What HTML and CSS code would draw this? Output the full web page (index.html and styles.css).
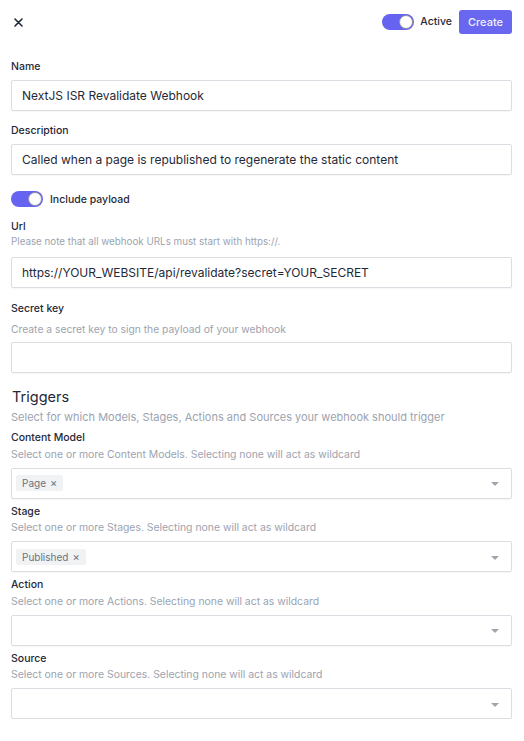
FILE: index.html
```html
<!DOCTYPE html>
<html>
<head>
<meta charset="utf-8">
<link rel="stylesheet" href="styles.css">
</head>
<body>
<div class="page">
  <header class="topbar">
    <button class="close" aria-label="Close">
      <svg width="9" height="9" viewBox="0 0 9 9"><path d="M1 1L8 8M8 1L1 8" stroke="#1f2937" stroke-width="1.6" stroke-linecap="round"/></svg>
    </button>
    <div class="top-actions">
      <span class="toggle"><span class="knob"></span></span>
      <span class="toggle-label">Active</span>
      <button class="create">Create</button>
    </div>
  </header>

  <div class="field f-name">
    <div class="label">Name</div>
    <div class="input">NextJS ISR Revalidate Webhook</div>
  </div>

  <div class="field f-desc">
    <div class="label">Description</div>
    <div class="input">Called when a page is republished to regenerate the static content</div>
  </div>

  <div class="toggle-row">
    <span class="toggle"><span class="knob"></span></span>
    <span class="toggle-label">Include payload</span>
  </div>

  <div class="field f-url">
    <div class="label">Url</div>
    <div class="help help-url">Please note that all webhook URLs must start with https://.</div>
    <div class="input">https://YOUR_WEBSITE/api/revalidate?secret=YOUR_SECRET</div>
  </div>

  <div class="field f-secret">
    <div class="label">Secret key</div>
    <div class="help help-secret">Create a secret key to sign the payload of your webhook</div>
    <div class="input"></div>
  </div>

  <h2 class="section">Triggers</h2>
  <div class="help section-help">Select for which Models, Stages, Actions and Sources your webhook should trigger</div>

  <div class="field sel-field">
    <div class="label">Content Model</div>
    <div class="help help-md">Select one or more Content Models. Selecting none will act as wildcard</div>
    <div class="select">
      <div class="tags"><span class="tag">Page <span class="tag-x">×</span></span></div>
      <span class="chev"></span>
    </div>
  </div>

  <div class="field sel-field">
    <div class="label">Stage</div>
    <div class="help help-md">Select one or more Stages. Selecting none will act as wildcard</div>
    <div class="select">
      <div class="tags"><span class="tag">Published <span class="tag-x">×</span></span></div>
      <span class="chev"></span>
    </div>
  </div>

  <div class="field sel-field">
    <div class="label">Action</div>
    <div class="help help-md">Select one or more Actions. Selecting none will act as wildcard</div>
    <div class="select">
      <div class="tags"></div>
      <span class="chev"></span>
    </div>
  </div>

  <div class="field sel-field">
    <div class="label">Source</div>
    <div class="help help-md">Select one or more Sources. Selecting none will act as wildcard</div>
    <div class="select">
      <div class="tags"></div>
      <span class="chev"></span>
    </div>
  </div>
</div>
</body>
</html>
```

FILE: styles.css
```css
* { box-sizing: border-box; }
html, body { margin: 0; padding: 0; background: #fff; }
body {
  font-family: Inter, "Noto Sans", "Liberation Sans", sans-serif;
  color: #1f2937;
}
.page {
  padding: 0 12px 0 11px;
}
.topbar {
  display: flex;
  justify-content: space-between;
  align-items: center;
  padding-top: 10px;
  height: 34px;
}
.close {
  border: 0;
  background: none;
  padding: 0;
  margin-left: 3px;
  margin-top: 1px;
  width: 9px;
  height: 9px;
  display: flex;
}
.top-actions {
  display: flex;
  align-items: center;
}
.toggle {
  position: relative;
  display: inline-block;
  width: 32px;
  height: 16px;
  border-radius: 8px;
  background: #6563ef;
  flex: none;
}
.knob {
  position: absolute;
  right: 1px;
  top: 1px;
  width: 14px;
  height: 14px;
  border-radius: 50%;
  background: #fff;
  border: 1px solid #8b8fa0;
}
.toggle-label {
  font-size: 10.5px;
  font-weight: 500;
  color: #1f2937;
}
.top-actions .toggle-label { margin-left: 6px; margin-right: 7px; margin-top: -2px; }
.create {
  border: 0;
  background: #6966f0;
  color: #eef0ff;
  font-family: inherit;
  font-size: 11px;
  font-weight: 500;
  height: 24px;
  width: 53px;
  border-radius: 3px;
  padding: 0;
}
.field { display: flex; flex-direction: column; }
.label {
  font-size: 10.5px;
  font-weight: 500;
  line-height: 16px;
  color: #1f2937;
}
.help {
  font-size: 11px;
  line-height: 16px;
  color: #9ca3af;
}
.help-url { font-size: 9.8px; }
.help-secret { font-size: 10.3px; margin-top: 4px; }
.help-md { font-size: 10.4px; }
.input {
  height: 31px;
  border: 1px solid #dadde2;
  border-radius: 2px;
  font-size: 12px;
  line-height: 29px;
  padding: 0 10px;
  color: #1f2937;
  box-shadow: 0 1px 2px rgba(0,0,0,0.04);
  white-space: nowrap;
  overflow: hidden;
}
.f-name { margin-top: 25px; }
.f-name .label, .f-desc .label { margin-bottom: 5px; }
.f-desc { margin-top: 12px; }
.toggle-row {
  display: flex;
  align-items: center;
  gap: 7px;
  margin-top: 16px;
  height: 16px;
}
.f-url { margin-top: 12px; }
.f-url .help { margin-top: -1px; margin-bottom: 1px; }
.f-url .input { margin-top: 6px; }
.f-secret { margin-top: 13px; }
.f-secret .input { margin-top: 5px; }
.section {
  font-size: 14.5px;
  font-weight: 400;
  line-height: 22px;
  margin: 13px 0 0;
  color: #1f2937;
  padding-left: 1px;
}
.section-help { margin-top: 1px; }
.sel-field { margin-top: 5px; }
.sel-field .help { margin-top: 0.5px; margin-bottom: 5px; }
.sel-field + .sel-field { margin-top: 5px; }
.select {
  height: 31px;
  border: 1px solid #dadde2;
  border-radius: 2px;
  display: flex;
  align-items: center;
  justify-content: space-between;
  padding: 0 12px 0 4px;
  box-shadow: 0 1px 2px rgba(0,0,0,0.04);
}
.tags { display: flex; gap: 4px; }
.tag {
  background: #f1f2f4;
  border-radius: 2px;
  font-size: 10px;
  line-height: 16px;
  color: #6b7280;
  padding: 0 6px;
  display: inline-flex;
  gap: 4px;
}
.tag-x { font-size: 11px; color: #6b7280; }
.chev {
  width: 0;
  height: 0;
  border-left: 4px solid transparent;
  border-right: 4px solid transparent;
  border-top: 4px solid #a0a5b0;
  margin-top: 2px;
}
```
